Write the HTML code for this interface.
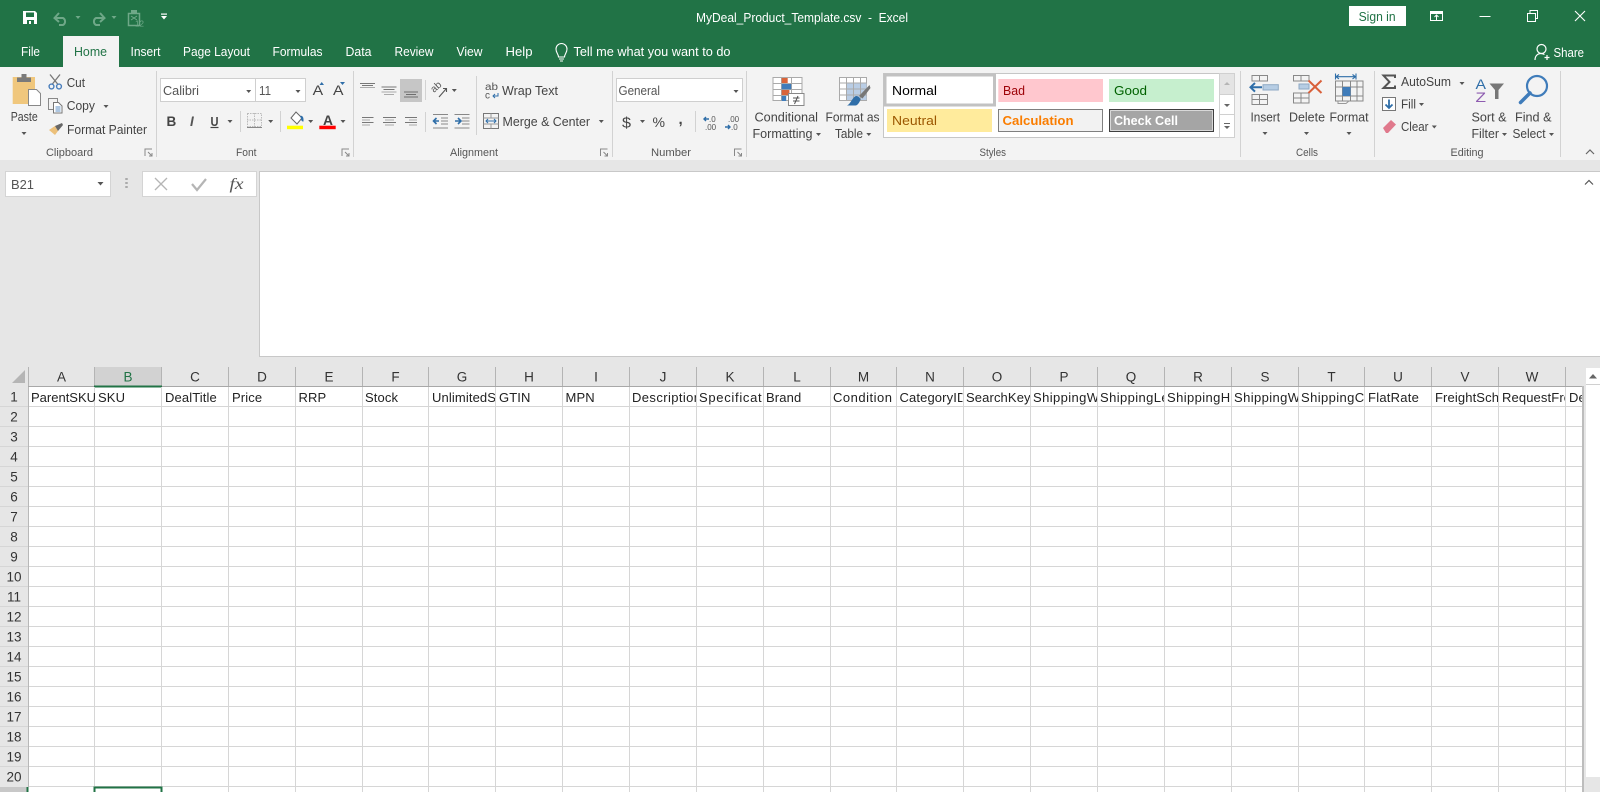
<!DOCTYPE html>
<html lang="en">
<head>
<meta charset="utf-8">
<title>MyDeal_Product_Template.csv - Excel</title>
<style>
html,body{margin:0;padding:0;width:1600px;height:792px;overflow:hidden;background:#e6e6e6}
svg{display:block}
body>svg{filter:blur(.3px)}
text{font-family:"Liberation Sans",sans-serif;font-size:12px;fill:#444}
.w{fill:#fff;font-size:12.5px}
.g{font-size:11px;fill:#555}
.c{font-size:13px;fill:#222;letter-spacing:.12px}
.s{letter-spacing:.4px}
.h{font-size:13.5px;fill:#333;text-anchor:middle}
.car{fill:#555}
.dim{fill:none;stroke:#6fa888;stroke-width:2}
</style>
</head>
<body>
<svg width="1600" height="792" viewBox="0 0 1600 792" xmlns="http://www.w3.org/2000/svg">
<!-- backgrounds -->
<rect width="1600" height="792" fill="#e6e6e6"/>
<rect width="1600" height="67" fill="#217346"/>
<rect y="67" width="1600" height="93" fill="#f3f3f3"/>
<rect x="63" y="36" width="56" height="32" fill="#f3f3f3"/>

<!-- QAT -->
<path d="M23 11h12l2 2v11H23z" fill="#fff"/>
<rect x="26" y="12.5" width="8" height="4.5" fill="#217346"/>
<rect x="27" y="20" width="7" height="4" fill="#217346"/>
<rect x="29" y="21" width="2" height="3" fill="#fff"/>
<path class="dim" d="M56 18h7a4 4 0 0 1 0 7h-4M59 13l-4.500 5 4.500 4"/>
<polygon points="75.500,16 80.500,16 78,19" fill="#6fa888"/>
<path class="dim" d="M103 18h-7a4 4 0 0 0 0 7h4M100 13l4.500 5-4.500 4"/>
<polygon points="111.500,16 116.500,16 114,19" fill="#6fa888"/>
<rect x="128.500" y="13.500" width="11" height="12" fill="none" stroke="#6fa888" stroke-width="1.500"/>
<rect x="131" y="10" width="6" height="4" fill="#6fa888"/>
<path d="M131 16l6 4M137 16l-6 4" stroke="#6fa888"/>
<text x="135" y="26.500" style="font-size:8px;fill:#6fa888">12</text>
<rect x="161" y="13.500" width="6" height="1.200" fill="#fff"/>
<polygon points="161,16 167,16 164,19.500" fill="#fff"/>

<!-- Title -->
<text class="w" x="696" y="22" textLength="212" lengthAdjust="spacingAndGlyphs" style="font-size:13px" xml:space="preserve">MyDeal_Product_Template.csv  -  Excel</text>
<rect x="1349" y="6" width="57" height="20" fill="#fff"/>
<text x="1358.600" y="21" textLength="37" lengthAdjust="spacingAndGlyphs" style="font-size:13px;fill:#217346">Sign in</text>
<rect x="1430.500" y="11.500" width="12" height="9" fill="none" stroke="#fff"/>
<rect x="1431" y="12" width="11" height="2" fill="#fff"/>
<path d="M1436.500 20v-5M1434.500 17l2-2 2 2" fill="none" stroke="#fff"/>
<path d="M1479.500 16.500h11" stroke="#fff"/>
<rect x="1527.500" y="13.500" width="8" height="8" fill="none" stroke="#fff"/>
<path d="M1530 13v-2.500h7.500v8H1536" fill="none" stroke="#fff"/>
<path d="M1575 11l10 10M1585 11l-10 10" stroke="#fff" stroke-width="1.100"/>

<!-- Tabs -->
<text class="w" x="21" y="55.800" textLength="19" lengthAdjust="spacingAndGlyphs">File</text>
<text x="74" y="55.800" textLength="33" lengthAdjust="spacingAndGlyphs" style="font-size:12.500px;fill:#217346">Home</text>
<text class="w" x="130.500" y="55.800" textLength="30" lengthAdjust="spacingAndGlyphs">Insert</text>
<text class="w" x="183" y="55.800" textLength="67" lengthAdjust="spacingAndGlyphs">Page Layout</text>
<text class="w" x="272.500" y="55.800" textLength="50" lengthAdjust="spacingAndGlyphs">Formulas</text>
<text class="w" x="345.500" y="55.800" textLength="26" lengthAdjust="spacingAndGlyphs">Data</text>
<text class="w" x="394.500" y="55.800" textLength="39" lengthAdjust="spacingAndGlyphs">Review</text>
<text class="w" x="456.500" y="55.800" textLength="26" lengthAdjust="spacingAndGlyphs">View</text>
<text class="w" x="505.500" y="55.800" textLength="27" lengthAdjust="spacingAndGlyphs">Help</text>
<path d="M558.500 57c0-3-2.500-4-2.500-8a5.500 5.500 0 0 1 11 0c0 4-2.500 5-2.500 8zM559 59h5M560 61h3" fill="none" stroke="#fff" stroke-width="1.100"/>
<text class="w" x="573.500" y="55.800" textLength="157" lengthAdjust="spacingAndGlyphs">Tell me what you want to do</text>
<circle cx="1541.500" cy="49" r="4.500" fill="none" stroke="#fff" stroke-width="1.200"/>
<path d="M1535 60c0-4 2.500-6.500 6-6.500 1.500 0 2.500.5 3.500 1M1544.500 57.500h5M1547 55v5" fill="none" stroke="#fff" stroke-width="1.200"/>
<text class="w" x="1553.500" y="57" textLength="30.500" lengthAdjust="spacingAndGlyphs">Share</text>

<!-- group separators -->
<path d="M156.500 71v86M353.500 71v86M612.500 71v86M746.500 71v86M1240.500 71v86M1374.500 71v86M1560.500 71v86" stroke="#d2d2d2"/>
<path d="M240.500 111v21M280.500 111v21M425.500 80v20M425.500 112v20M476.500 76v59M695.500 111v21" stroke="#d2d2d2"/>

<!-- group labels -->
<text class="g" x="46" y="156" textLength="47" lengthAdjust="spacingAndGlyphs">Clipboard</text>
<text class="g" x="236" y="156" textLength="20.500" lengthAdjust="spacingAndGlyphs">Font</text>
<text class="g" x="450" y="156" textLength="48" lengthAdjust="spacingAndGlyphs">Alignment</text>
<text class="g" x="651" y="156" textLength="40" lengthAdjust="spacingAndGlyphs">Number</text>
<text class="g" x="979.500" y="156" textLength="26.500" lengthAdjust="spacingAndGlyphs">Styles</text>
<text class="g" x="1296" y="156" textLength="22" lengthAdjust="spacingAndGlyphs">Cells</text>
<text class="g" x="1450.500" y="156" textLength="33" lengthAdjust="spacingAndGlyphs">Editing</text>
<!-- dialog launchers -->
<path d="M145 156v-7h7M148 152l3.500 3.500M152 153v3h-3M342 156v-7h7M345 152l3.500 3.500M349 153v3h-3M600.500 156v-7h7M603.500 152l3.500 3.500M607.500 153v3h-3M734.500 156v-7h7M737.500 152l3.500 3.500M741.500 153v3h-3" fill="none" stroke="#888"/>

<!-- Clipboard -->
<rect x="12.700" y="77" width="22.300" height="27" fill="#f0c77d"/>
<rect x="17" y="77.500" width="14" height="4.500" fill="#7a7a7a"/>
<rect x="21.500" y="74" width="5" height="4" fill="#7a7a7a"/>
<path d="M28.500 89.500h8l4 4v12h-12z" fill="#fff" stroke="#888"/>
<text x="10.700" y="121" textLength="27" lengthAdjust="spacingAndGlyphs" style="font-size:12.500px">Paste</text>
<polygon class="car" points="21.500,132 26.500,132 24,135"/>
<path d="M50 74.500l8 10M60 74.500l-8 10" stroke="#777" stroke-width="1.300"/>
<circle cx="51.500" cy="86.500" r="2.400" fill="none" stroke="#4a7ebb" stroke-width="1.400"/>
<circle cx="59" cy="86.500" r="2.400" fill="none" stroke="#4a7ebb" stroke-width="1.400"/>
<text x="66.700" y="87" textLength="18.300" lengthAdjust="spacingAndGlyphs" style="font-size:12.500px">Cut</text>
<rect x="48.500" y="98.500" width="9" height="11" fill="#f3f3f3" stroke="#888"/>
<path d="M53.500 102.500h5l3.500 3.500v7h-8.500z" fill="#fff" stroke="#777"/>
<path d="M55.500 107h5M55.500 109h5M55.500 111h5" stroke="#5d8fc4"/>
<text x="66.700" y="110" textLength="28.300" lengthAdjust="spacingAndGlyphs" style="font-size:12.500px">Copy</text>
<polygon class="car" points="103.500,105 108.500,105 106,108"/>
<path d="M49 130l6-4 3 5-3 4z" fill="#ecc07a"/>
<path d="M55 126l7-3 1 2-5 6z" fill="#666"/>
<text x="67" y="134" textLength="80" lengthAdjust="spacingAndGlyphs" style="font-size:12.500px">Format Painter</text>

<!-- Font -->
<rect x="160.500" y="78.500" width="95" height="23" fill="#fff" stroke="#cfcfcf"/>
<rect x="255.500" y="78.500" width="50" height="23" fill="#fff" stroke="#cfcfcf"/>
<text x="163" y="95" textLength="36" lengthAdjust="spacingAndGlyphs" style="font-size:12.500px;fill:#555">Calibri</text>
<text x="259" y="95" textLength="12" lengthAdjust="spacingAndGlyphs" style="font-size:12.500px;fill:#555">11</text>
<polygon class="car" points="246.200,90 251.200,90 248.700,93"/>
<polygon class="car" points="295.500,90 300.500,90 298,93"/>
<text x="312.700" y="95" textLength="10.500" lengthAdjust="spacingAndGlyphs" style="font-size:14px">A</text>
<polygon points="319.500,85 324,85 321.700,82" fill="#2f6ea8"/>
<text x="333" y="95" textLength="10.500" lengthAdjust="spacingAndGlyphs" style="font-size:14px">A</text>
<polygon points="340,82 345,82 342.500,85" fill="#2f6ea8"/>
<text x="166.500" y="126" style="font-size:13.500px;font-weight:bold;fill:#444">B</text>
<text x="190" y="126" style="font-size:13.500px;font-weight:bold;font-style:italic;fill:#555">I</text>
<text x="210.500" y="126" textLength="8" lengthAdjust="spacingAndGlyphs" style="font-size:13px;font-weight:bold;fill:#444">U</text>
<path d="M210.500 127.500h8" stroke="#444" stroke-width="1.200"/>
<polygon class="car" points="227.500,120 232.500,120 230,123"/>
<rect x="247.500" y="113.500" width="14" height="13" fill="none" stroke="#bbb" stroke-dasharray="1.500 1"/>
<path d="M254.500 113v14M247 120h15" stroke="#bbb" stroke-dasharray="1.500 1"/>
<path d="M247 127.500h15" stroke="#888"/>
<polygon class="car" points="268.200,120 273.200,120 270.700,123"/>
<path d="M291 118l5-6 6 6-5 6z" fill="#fff" stroke="#666"/>
<path d="M300 116c2-1 3.500 1 3.500 3.500v2c-1.500 0-2.500-1-2.500-3z" fill="#2f6ea8"/>
<rect x="287" y="125.700" width="16" height="3.500" fill="#ffff00"/>
<polygon class="car" points="308.200,120 313.200,120 310.700,123"/>
<text x="323" y="125" textLength="10" lengthAdjust="spacingAndGlyphs" style="font-size:14px;font-weight:bold;fill:#444">A</text>
<rect x="319.300" y="125.700" width="16.400" height="3.500" fill="#ff0000"/>
<polygon class="car" points="340.500,120 345.500,120 343,123"/>

<!-- Alignment -->
<rect x="400" y="79" width="22" height="23" fill="#c6c6c6"/>
<path d="M360 83.500h15M362 85.500h11" stroke="#777"/><path d="M360 87.500h15" stroke="#aaa"/>
<path d="M381.500 87h15M383.500 89.500h11" stroke="#777"/><path d="M381.500 92h15M384 94.500h10" stroke="#aaa"/>
<path d="M404 92h14M406 94.500h10M404 97h14" stroke="#6e6e6e"/>
<text transform="translate(434 93) rotate(-42)" style="font-size:10px;fill:#555">ab</text>
<path d="M439 97l7-8M443 88.500h3.500v3.500" fill="none" stroke="#555" stroke-width="1.100"/>
<polygon class="car" points="451.800,89 456.800,89 454.300,92"/>
<path d="M362 117.500h11.500M362 122.500h11.500" stroke="#777"/><path d="M362 120h8M362 125h8" stroke="#aaa"/>
<path d="M383 117.500h13M383 122.500h13" stroke="#777"/><path d="M385 120h9M385 125h9" stroke="#aaa"/>
<path d="M405 117.500h12M405 122.500h12" stroke="#777"/><path d="M409 120h8M409 125h8" stroke="#aaa"/>
<path d="M433 114.500h15M441 118h7M441 121h7M441 124h7M433 128h15" stroke="#888"/>
<path d="M439 121h-5.500M436.500 118l-3 3 3 3" fill="none" stroke="#2f6ea8" stroke-width="1.600"/>
<path d="M454.500 114.500h15M462 118h7.500M462 121h7.500M462 124h7.500M454.500 128h15" stroke="#888"/>
<path d="M455 121h5.500M458 118l3 3-3 3" fill="none" stroke="#2f6ea8" stroke-width="1.600"/>
<text x="485" y="90" textLength="13" lengthAdjust="spacingAndGlyphs" style="font-size:10px;fill:#555">ab</text>
<text x="485" y="98.500" style="font-size:10px;fill:#555">c</text>
<path d="M498 93v3h-5M495 94l-2 2 2 2" fill="none" stroke="#2f6ea8"/>
<text x="502" y="95" textLength="56" lengthAdjust="spacingAndGlyphs" style="font-size:12.500px">Wrap Text</text>
<rect x="483.500" y="113.500" width="15" height="15" fill="none" stroke="#777"/>
<path d="M483.500 118h15M483.500 124h15M491 113.500v4M491 124v4.500" stroke="#999"/>
<path d="M486 121h10M488 119l-2 2 2 2M494 119l2 2-2 2" fill="none" stroke="#2f6ea8"/>
<text x="502.500" y="126" textLength="87.500" lengthAdjust="spacingAndGlyphs" style="font-size:12.500px">Merge &amp; Center</text>
<polygon class="car" points="598.800,120 603.800,120 601.300,123"/>

<!-- Number -->
<rect x="616.500" y="78.500" width="126" height="23" fill="#fff" stroke="#cfcfcf"/>
<text x="618.500" y="95" textLength="41.500" lengthAdjust="spacingAndGlyphs" style="font-size:12.500px;fill:#555">General</text>
<polygon class="car" points="733.500,90 738.500,90 736,93"/>
<text x="622" y="127.500" textLength="9" lengthAdjust="spacingAndGlyphs" style="font-size:15px;fill:#444">$</text>
<polygon class="car" points="640,120 645,120 642.500,123"/>
<text x="652.500" y="127" textLength="12.500" lengthAdjust="spacingAndGlyphs" style="font-size:14px;fill:#444">%</text>
<text x="678.500" y="124" style="font-size:15px;font-weight:bold;fill:#444">,</text>
<text x="709" y="122" style="font-size:8px;fill:#555">.0</text>
<text x="705" y="130" style="font-size:8px;fill:#555">.00</text>
<path d="M709 119h-5M706 117l-2 2 2 2" fill="none" stroke="#2f6ea8" stroke-width="1.400"/>
<text x="728" y="122" style="font-size:8px;fill:#555">.00</text>
<text x="731" y="130" style="font-size:8px;fill:#555">.0</text>
<path d="M725 127h5M728 125l2 2-2 2" fill="none" stroke="#2f6ea8" stroke-width="1.400"/>

<!-- Conditional formatting -->
<rect x="773" y="77.500" width="29" height="23" fill="#fff" stroke="#aaa"/>
<path d="M781.500 77.500v23M791.500 77.500v23M802 77.500v23M773 83.500h29M773 89.500h29M773 95.500h29" stroke="#aaa"/>
<rect x="781.700" y="78" width="6" height="5" fill="#d9643a"/>
<rect x="781.700" y="84" width="9.500" height="5.300" fill="#3f7cba"/>
<rect x="781.700" y="90" width="7.700" height="5" fill="#d9643a"/>
<rect x="781.700" y="96" width="4.500" height="5" fill="#3f7cba"/>
<rect x="788.500" y="93.500" width="15.500" height="12" fill="#fff" stroke="#888"/>
<path d="M793 98h6.500M793 101h6.500M798 96l-3.500 8" stroke="#555" fill="none"/>
<text x="754.500" y="121.500" textLength="63.500" lengthAdjust="spacingAndGlyphs" style="font-size:12.500px">Conditional</text>
<text x="752.500" y="138" textLength="60" lengthAdjust="spacingAndGlyphs" style="font-size:12.500px">Formatting</text>
<polygon class="car" points="816,133 821,133 818.500,136"/>
<!-- Format as table -->
<rect x="839.500" y="77.500" width="27" height="23" fill="#fff" stroke="#aaa"/>
<rect x="846" y="83" width="20.500" height="17" fill="#b9cde5"/>
<path d="M846.500 77.500v23M853.500 77.500v23M860.500 77.500v23M839.500 83h27M839.500 89h27M839.500 95h27" stroke="#aaa"/>
<path d="M869.500 85l1 3-8 10.500-3.500-2.500z" fill="#777"/>
<path d="M847 105.500c3-1 5-7 8-9 2-1.500 5 1 5.500 3-1 3-3 6-5 6z" fill="#2f6ea8"/>
<text x="825.500" y="121.500" textLength="54" lengthAdjust="spacingAndGlyphs" style="font-size:12.500px">Format as</text>
<text x="835" y="138" textLength="28" lengthAdjust="spacingAndGlyphs" style="font-size:12.500px">Table</text>
<polygon class="car" points="866.300,133 871.300,133 868.800,136"/>

<!-- Styles gallery -->
<rect x="883.500" y="73.500" width="351" height="64" fill="#fff" stroke="#c6c6c6"/>
<rect x="885" y="75" width="109.500" height="30" fill="#fff" stroke="#c2c2c2" stroke-width="3"/>
<rect x="998.300" y="79" width="104.700" height="23" fill="#ffc7ce"/>
<rect x="1109" y="79" width="105" height="23" fill="#c6efce"/>
<rect x="887" y="109" width="105" height="23" fill="#ffeb9c"/>
<rect x="998.500" y="109.500" width="104" height="22" fill="#f2f2f2" stroke="#7f7f7f"/>
<rect x="1109" y="109" width="105" height="23" fill="#3f3f3f"/>
<rect x="1110.500" y="110.500" width="102" height="20" fill="#a5a5a5" stroke="#f2f2f2" stroke-width="0.800"/>
<text x="892" y="95" textLength="45" lengthAdjust="spacingAndGlyphs" style="font-size:13px;fill:#000">Normal</text>
<text x="1003" y="95" textLength="22" lengthAdjust="spacingAndGlyphs" style="font-size:13px;fill:#9c0006">Bad</text>
<text x="1114" y="95" textLength="33" lengthAdjust="spacingAndGlyphs" style="font-size:13px;fill:#006100">Good</text>
<text x="892" y="125" textLength="45" lengthAdjust="spacingAndGlyphs" style="font-size:13px;fill:#9c5700">Neutral</text>
<text x="1002.500" y="125" textLength="71" lengthAdjust="spacingAndGlyphs" style="font-size:13px;font-weight:bold;fill:#fa7d00">Calculation</text>
<text x="1114" y="125" textLength="64" lengthAdjust="spacingAndGlyphs" style="font-size:13px;font-weight:bold;fill:#fff">Check Cell</text>
<rect x="1219.500" y="73.500" width="15" height="21" fill="#e4e4e4" stroke="#d0d0d0"/>
<rect x="1219.500" y="94.500" width="15" height="20" fill="#fff" stroke="#d0d0d0"/>
<rect x="1219.500" y="114.500" width="15" height="23" fill="#fff" stroke="#d0d0d0"/>
<polygon points="1224,85 1230,85 1227,82" fill="#b5b5b5"/>
<polygon points="1224,104 1230,104 1227,107" fill="#666"/>
<path d="M1224 123.500h6" stroke="#666"/>
<polygon points="1224,126 1230,126 1227,129" fill="#666"/>

<!-- Cells -->
<g fill="none" stroke="#888">
<rect x="1252" y="75.500" width="15.500" height="5.500"/><path d="M1259.500 75.500v5.500"/>
<rect x="1252" y="94.500" width="15.500" height="10"/><path d="M1259.500 94.500v10M1252 99.500h15.500"/>
<rect x="1293.500" y="75.500" width="15.500" height="5.500"/><path d="M1301 75.500v5.500"/>
<rect x="1293.500" y="93" width="15.500" height="10"/><path d="M1301 93v10M1293.500 98h15.500"/>
<rect x="1335.500" y="81" width="27.500" height="20"/><path d="M1342.500 81v20M1350.500 81v20M1357 81v20M1335.500 87h27.500M1335.500 96h27.500"/>
<path d="M1338 101v2.500h8l3-2.500" stroke="#999"/>
</g>
<rect x="1263" y="84.700" width="15.300" height="5.300" fill="#b6cde4" stroke="#8fa9c4"/>
<path d="M1262 87.300h-10M1255 83l-4.500 4.300 4.500 4.300" fill="none" stroke="#2f6ea8" stroke-width="2"/>
<rect x="1299" y="84" width="10" height="5" fill="#b6cde4" stroke="#8fa9c4"/>
<path d="M1308.500 80.500l13 12.500M1321.500 80.500l-13 12.500" stroke="#d9603a" stroke-width="2"/>
<path d="M1336 76.700h19.500M1339 74.500l-3 2.200 3 2.200M1352.500 74.500l3 2.200-3 2.200M1335.500 73.500v6M1356 73.500v6" fill="none" stroke="#2f6ea8" stroke-width="1.100"/>
<rect x="1342.500" y="87" width="8" height="9" fill="#3f7cba"/>
<text x="1250.500" y="121.500" textLength="29.500" lengthAdjust="spacingAndGlyphs" style="font-size:12.500px">Insert</text>
<polygon class="car" points="1262.500,132 1267.500,132 1265,135"/>
<text x="1289" y="121.500" textLength="36" lengthAdjust="spacingAndGlyphs" style="font-size:12.500px">Delete</text>
<polygon class="car" points="1304,132 1309,132 1306.500,135"/>
<text x="1329.500" y="121.500" textLength="39" lengthAdjust="spacingAndGlyphs" style="font-size:12.500px">Format</text>
<polygon class="car" points="1346.500,132 1351.500,132 1349,135"/>

<!-- Editing -->
<path d="M1395 78v-2.500h-11.500l6 6.500-6 6h11.500v-2.500" fill="none" stroke="#555" stroke-width="2"/>
<text x="1401" y="86" textLength="50" lengthAdjust="spacingAndGlyphs" style="font-size:12.500px">AutoSum</text>
<polygon class="car" points="1459.500,82 1464.500,82 1462,85"/>
<rect x="1382.500" y="97.500" width="13" height="13" fill="#fff" stroke="#777"/>
<path d="M1389 99.500v8M1385.500 104.500l3.500 3.500 3.500-3.500" fill="none" stroke="#2f6ea8" stroke-width="1.800"/>
<text x="1401" y="108.500" textLength="15" lengthAdjust="spacingAndGlyphs" style="font-size:12.500px">Fill</text>
<polygon class="car" points="1419,103 1424,103 1421.500,106"/>
<path d="M1383 128l8-8 5 4.500-8 8.500h-2z" fill="#e0798c"/>
<text x="1401" y="131" textLength="27.500" lengthAdjust="spacingAndGlyphs" style="font-size:12.500px">Clear</text>
<polygon class="car" points="1431.800,125.500 1436.800,125.500 1434.300,128.500"/>
<text x="1475.500" y="89" textLength="10.500" lengthAdjust="spacingAndGlyphs" style="font-size:14px;fill:#2f6ea8">A</text>
<text x="1475.500" y="102" textLength="10.500" lengthAdjust="spacingAndGlyphs" style="font-size:14px;fill:#8e5cb0">Z</text>
<path d="M1489.500 83.500h14.500l-5.500 6.500v9h-3.500v-9z" fill="#777"/>
<text x="1471.500" y="121.500" textLength="35" lengthAdjust="spacingAndGlyphs" style="font-size:12.500px">Sort &amp;</text>
<text x="1471.500" y="138" textLength="27.500" lengthAdjust="spacingAndGlyphs" style="font-size:12.500px">Filter</text>
<polygon class="car" points="1502,133 1507,133 1504.500,136"/>
<circle cx="1537" cy="86" r="10" fill="none" stroke="#3f7cba" stroke-width="2.200"/>
<path d="M1530 93l-9.500 9.500" stroke="#3f7cba" stroke-width="3.500" stroke-linecap="round"/>
<text x="1515" y="121.500" textLength="36.500" lengthAdjust="spacingAndGlyphs" style="font-size:12.500px">Find &amp;</text>
<text x="1512.500" y="138" textLength="33" lengthAdjust="spacingAndGlyphs" style="font-size:12.500px">Select</text>
<polygon class="car" points="1549,133 1554,133 1551.500,136"/>
<path d="M1586 154l4-4 4 4" fill="none" stroke="#666" stroke-width="1.200"/>

<!-- Formula bar -->
<rect x="5.500" y="171.500" width="105" height="25" fill="#fff" stroke="#d4d4d4"/>
<text x="11" y="189" textLength="23" lengthAdjust="spacingAndGlyphs" style="font-size:13px;fill:#555">B21</text>
<polygon class="car" points="97.500,182 103.500,182 100.500,185.500"/>
<path d="M126.500 178v2M126.500 182v2M126.500 186v2" stroke="#aaa" stroke-width="2.500"/>
<rect x="142.500" y="171.500" width="114" height="25" fill="#fff" stroke="#d4d4d4"/>
<path d="M155 178l12 12M167 178l-12 12" stroke="#b5b5b5" stroke-width="1.300"/>
<path d="M192 184l5 6 9-11" fill="none" stroke="#b5b5b5" stroke-width="2.200"/>
<text x="229.500" y="189" textLength="14" lengthAdjust="spacingAndGlyphs" style="font-family:'Liberation Serif',serif;font-size:16px;font-style:italic;fill:#555">fx</text>
<rect x="259.500" y="171.500" width="1341" height="185" fill="#fff" stroke="#c8c8c8"/>
<path d="M1585 184.500l4-4 4 4" fill="none" stroke="#555" stroke-width="1.200"/>

<!-- Sheet -->
<rect x="28" y="387" width="1555" height="405" fill="#fff"/>
<rect x="0" y="787" width="28" height="5" fill="#c8c8c8"/>
<polygon points="12,383 25,370 25,383" fill="#b5b5b5"/>
<rect x="94.500" y="367" width="67" height="19" fill="#d2d2d2"/>
<path d="M28.500 367v19M94.500 367v19M161.500 367v19M228.500 367v19M295.500 367v19M362.500 367v19M428.500 367v19M495.500 367v19M562.500 367v19M629.500 367v19M696.500 367v19M763.500 367v19M830.500 367v19M896.500 367v19M963.500 367v19M1030.500 367v19M1097.500 367v19M1164.500 367v19M1231.500 367v19M1298.500 367v19M1364.500 367v19M1431.500 367v19M1498.500 367v19M1565.500 367v19" stroke="#b4b4b4"/>
<path d="M28 386.500h1555" stroke="#a8a8a8"/>
<path d="M94 386.500h68" stroke="#217346" stroke-width="2"/>
<path d="M0 406.500h1583M0 426.500h1583M0 446.500h1583M0 466.500h1583M0 486.500h1583M0 506.500h1583M0 526.500h1583M0 546.500h1583M0 566.500h1583M0 586.500h1583M0 606.500h1583M0 626.500h1583M0 646.500h1583M0 666.500h1583M0 686.500h1583M0 706.500h1583M0 726.500h1583M0 746.500h1583M0 766.500h1583M28 786.500h1555" stroke="#d6d6d6"/>
<path d="M94.500 387v405M161.500 387v405M228.500 387v405M295.500 387v405M362.500 387v405M428.500 387v405M495.500 387v405M562.500 387v405M629.500 387v405M696.500 387v405M763.500 387v405M830.500 387v405M896.500 387v405M963.500 387v405M1030.500 387v405M1097.500 387v405M1164.500 387v405M1231.500 387v405M1298.500 387v405M1364.500 387v405M1431.500 387v405M1498.500 387v405M1565.500 387v405" stroke="#d6d6d6"/>
<path d="M28.500 387v400" stroke="#b8b8b8"/>
<rect x="1582" y="386" width="2" height="406" fill="#bdbdbd"/>
<path d="M27.500 787v5" stroke="#217346" stroke-width="2"/>
<path d="M94.500 792v-4.500h67v4.500" fill="none" stroke="#217346" stroke-width="2"/>

<!-- Column headers -->
<text class="h" x="61.500" y="381.500">A</text>
<text class="h" x="128" y="381.500" style="fill:#217346">B</text>
<text class="h" x="195" y="381.500">C</text>
<text class="h" x="262" y="381.500">D</text>
<text class="h" x="329" y="381.500">E</text>
<text class="h" x="395.500" y="381.500">F</text>
<text class="h" x="462" y="381.500">G</text>
<text class="h" x="529" y="381.500">H</text>
<text class="h" x="596" y="381.500">I</text>
<text class="h" x="663" y="381.500">J</text>
<text class="h" x="730" y="381.500">K</text>
<text class="h" x="797" y="381.500">L</text>
<text class="h" x="863.500" y="381.500">M</text>
<text class="h" x="930" y="381.500">N</text>
<text class="h" x="997" y="381.500">O</text>
<text class="h" x="1064" y="381.500">P</text>
<text class="h" x="1131" y="381.500">Q</text>
<text class="h" x="1198" y="381.500">R</text>
<text class="h" x="1265" y="381.500">S</text>
<text class="h" x="1331.500" y="381.500">T</text>
<text class="h" x="1398" y="381.500">U</text>
<text class="h" x="1465" y="381.500">V</text>
<text class="h" x="1532" y="381.500">W</text>
<!-- Row headers -->
<text class="h" x="14" y="401.500">1</text>
<text class="h" x="14" y="421.500">2</text>
<text class="h" x="14" y="441.500">3</text>
<text class="h" x="14" y="461.500">4</text>
<text class="h" x="14" y="481.500">5</text>
<text class="h" x="14" y="501.500">6</text>
<text class="h" x="14" y="521.500">7</text>
<text class="h" x="14" y="541.500">8</text>
<text class="h" x="14" y="561.500">9</text>
<text class="h" x="14" y="581.500">10</text>
<text class="h" x="14" y="601.500">11</text>
<text class="h" x="14" y="621.500">12</text>
<text class="h" x="14" y="641.500">13</text>
<text class="h" x="14" y="661.500">14</text>
<text class="h" x="14" y="681.500">15</text>
<text class="h" x="14" y="701.500">16</text>
<text class="h" x="14" y="721.500">17</text>
<text class="h" x="14" y="741.500">18</text>
<text class="h" x="14" y="761.500">19</text>
<text class="h" x="14" y="781.500">20</text>

<!-- Cells row 1 -->
<text class="c" x="31" y="402" style="letter-spacing:0">ParentSKU</text>
<text class="c" x="98" y="402">SKU</text>
<text class="c" x="165" y="402">DealTitle</text>
<text class="c" x="232" y="402">Price</text>
<text class="c" x="298.500" y="402">RRP</text>
<text class="c" x="365" y="402">Stock</text>
<svg x="432" y="388" width="63" height="18"><text class="c" x="0" y="14">UnlimitedSt</text></svg>
<text class="c" x="499" y="402">GTIN</text>
<text class="c" x="565.500" y="402">MPN</text>
<svg x="632" y="388" width="64" height="18"><text class="c s" x="0" y="14">Description</text></svg>
<svg x="699" y="388" width="64" height="18"><text class="c s" x="0" y="14" style="letter-spacing:.7px">Specification</text></svg>
<text class="c" x="766" y="402">Brand</text>
<text class="c" x="833" y="402" style="letter-spacing:.5px">Condition</text>
<svg x="899.500" y="388" width="63" height="18"><text class="c" x="0" y="14">CategoryID</text></svg>
<svg x="966" y="388" width="64" height="18"><text class="c" x="0" y="14">SearchKeyw</text></svg>
<svg x="1033" y="388" width="64" height="18"><text class="c s" x="0" y="14">ShippingWe</text></svg>
<svg x="1100" y="388" width="64" height="18"><text class="c s" x="0" y="14">ShippingLen</text></svg>
<svg x="1167" y="388" width="64" height="18"><text class="c s" x="0" y="14">ShippingHei</text></svg>
<svg x="1234" y="388" width="64" height="18"><text class="c s" x="0" y="14">ShippingWi</text></svg>
<svg x="1301" y="388" width="63" height="18"><text class="c s" x="0" y="14">ShippingCos</text></svg>
<text class="c" x="1368" y="402" style="letter-spacing:.25px">FlatRate</text>
<svg x="1435" y="388" width="63" height="18"><text class="c" x="0" y="14">FreightSche</text></svg>
<svg x="1502" y="388" width="63" height="18"><text class="c" x="0" y="14">RequestFre</text></svg>
<svg x="1569" y="388" width="13" height="18"><text class="c" x="0" y="14">De</text></svg>

<!-- Vertical scrollbar -->
<rect x="1584" y="360" width="16" height="432" fill="#e6e6e6"/>
<rect x="1586" y="368" width="14" height="409" fill="#fff"/>
<path d="M1586 384.500h14" stroke="#d0d0d0"/>
<polygon points="1589,378.500 1597,378.500 1593,374" fill="#666"/>
</svg>
</body>
</html>
